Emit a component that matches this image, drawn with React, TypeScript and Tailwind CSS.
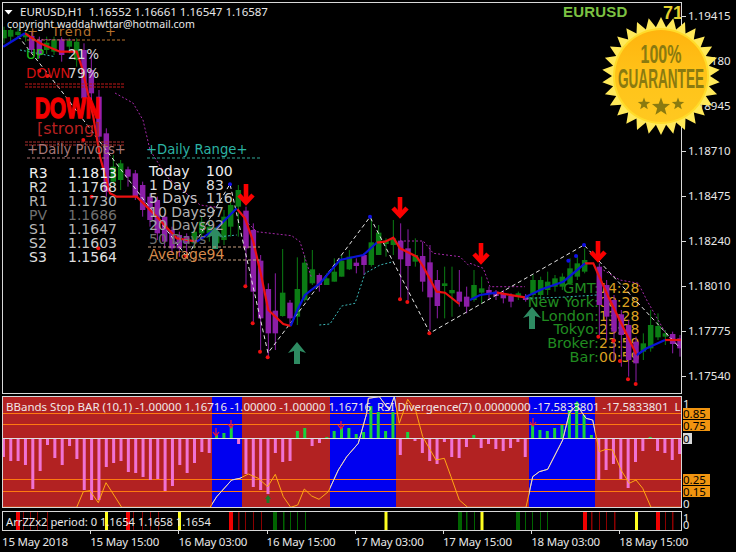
import React from "react";

type P = [number, number];
const z1 = (x: number, y: number): P => [x / 3, y / 3];
const z3 = (x: number, y: number): P => [x / 3, 390 + y / 3];
const z4 = (x: number, y: number): P => [366 + x / 3, 390 + y / 3];
const z5 = (x: number, y: number): P => [220 + x / 3, 170 + y / 3];
const z6 = (x: number, y: number): P => [470 + x / 3, 220 + y / 3];
const pts = (a: P[]) => a.map((p) => p[0].toFixed(1) + "," + p[1].toFixed(1)).join(" ");
const many = (f: (x: number, y: number) => P, a: number[][]) => a.map((q) => f(q[0], q[1]));

const G = "#0b7d14";
const V = "#8c1ea8";
// [x, bodyTop, bodyBottom, wickTop, wickBottom, colour]  in zoom coordinates
type C = [number, number, number, number, number, string];
const c1: C[] = [
  [12, 90, 115, 80, 130, G], [32, 90, 110, 80, 125, G], [54, 95, 105, 85, 115, G], [77, 100, 112, 92, 125, G],
  [95, 108, 150, 95, 160, V], [118, 120, 165, 110, 175, V], [140, 128, 150, 110, 162, G], [162, 118, 155, 110, 165, G],
  [185, 118, 165, 112, 185, V], [208, 122, 140, 115, 160, G], [230, 125, 180, 115, 200, G], [252, 150, 295, 130, 320, V],
  [274, 210, 280, 160, 300, V], [297, 290, 410, 270, 425, V], [319, 400, 575, 385, 590, V], [340, 500, 545, 465, 555, G],
  [362, 490, 540, 480, 570, G], [384, 508, 530, 500, 560, V], [406, 520, 590, 510, 600, V], [428, 555, 630, 545, 650, V],
  [450, 590, 660, 580, 680, V], [472, 600, 700, 590, 720, V], [494, 650, 725, 640, 745, V], [516, 690, 745, 680, 760, V],
  [538, 705, 745, 695, 770, V], [560, 708, 730, 700, 770, V], [583, 695, 730, 680, 745, G], [605, 665, 700, 650, 720, G],
  [628, 680, 700, 660, 725, G], [650, 695, 730, 680, 745, G], [672, 650, 720, 630, 735, G], [692, 615, 680, 590, 710, G],
  [715, 570, 620, 555, 710, G],
];
const c5: C[] = [
  [78, 122, 235, 110, 345, V], [100, 180, 365, 160, 455, V], [122, 272, 445, 255, 540, V], [145, 357, 490, 340, 560, V],
  [166, 422, 490, 310, 540, V], [188, 368, 438, 237, 440, G], [210, 398, 445, 390, 465, V], [232, 357, 440, 262, 465, G],
  [254, 278, 390, 255, 395, G], [277, 298, 340, 240, 345, G], [298, 315, 345, 310, 365, V], [320, 325, 345, 310, 345, G],
  [343, 305, 335, 265, 335, G], [365, 272, 320, 255, 320, G], [388, 260, 298, 240, 300, G], [409, 278, 288, 265, 310, V],
  [432, 255, 285, 250, 315, V], [454, 217, 285, 145, 290, G], [476, 188, 255, 165, 255, G], [498, 212, 222, 205, 260, G],
  [520, 205, 225, 150, 255, G], [542, 212, 268, 160, 385, V], [564, 235, 288, 178, 390, V], [586, 255, 275, 205, 290, G],
  [608, 258, 335, 215, 365, V], [630, 277, 382, 225, 480, V], [652, 330, 408, 300, 445, V], [674, 340, 348, 290, 445, G],
  [696, 360, 370, 290, 440, G], [718, 365, 395, 300, 410, V], [740, 380, 410, 350, 430, V],
];
const c6: C[] = [
  [12, 195, 240, 150, 245, G], [35, 205, 218, 170, 250, G], [57, 210, 220, 200, 240, V], [78, 215, 228, 210, 240, V],
  [100, 220, 235, 210, 250, V], [123, 228, 245, 220, 262, V], [145, 220, 230, 215, 240, G], [167, 228, 240, 222, 245, V],
  [189, 180, 225, 165, 240, G], [212, 180, 225, 170, 240, G], [233, 185, 210, 155, 225, G], [255, 175, 200, 165, 215, G],
  [277, 170, 200, 160, 210, G], [300, 145, 190, 115, 195, G], [322, 130, 170, 105, 180, G], [344, 120, 155, 85, 160, G],
  [388, 140, 255, 130, 345, V], [410, 195, 290, 180, 360, V], [432, 240, 335, 225, 420, V], [454, 283, 345, 270, 440, V],
  [476, 315, 420, 300, 470, V], [498, 365, 430, 350, 485, V], [520, 370, 395, 340, 420, G], [542, 315, 385, 270, 395, G],
  [564, 318, 352, 280, 360, G], [586, 340, 350, 330, 375, G], [608, 342, 372, 335, 400, V], [630, 355, 385, 345, 410, V],
];

const redDots: P[] = [
  z5(76, 349), z5(98, 460), z5(120, 545), z5(143, 562), z5(540, 388), z5(562, 396), z5(628, 490),
  z6(385, 350), z6(430, 362), z6(450, 423), z6(474, 478), z6(497, 492),
  z1(118, 212), z1(142, 228), z1(275, 590), z1(250, 420), z1(295, 745), z1(558, 768),
];
const blueDots: P[] = [z1(690, 553), z5(450, 140), z6(295, 122), z6(318, 108), z6(342, 75)];

const redPaths: P[][] = [
  many(z1, [[75, 100], [120, 130], [180, 155], [230, 155], [245, 200], [280, 350], [300, 470], [330, 580], [350, 590], [410, 590], [470, 650], [530, 715], [590, 725]]),
  many(z5, [[52, 118], [75, 145], [100, 215], [122, 310], [145, 420], [190, 462], [212, 468]]),
  many(z5, [[470, 218], [495, 215], [520, 203], [540, 235], [590, 260], [610, 290], [650, 365], [675, 368], [718, 402]]),
  many(z6, [[80, 218], [165, 232]]),
  many(z6, [[345, 130], [370, 130], [415, 230], [500, 405]]),
  many(z6, [[585, 360], [632, 360]]),
];
const bluePaths: P[][] = [
  many(z1, [[10, 140], [75, 100]]),
  many(z1, [[590, 725], [650, 685], [710, 625]]),
  many(z5, [[212, 468], [232, 420], [255, 375], [300, 340], [360, 270], [430, 255], [470, 218]]),
  many(z6, [[0, 240], [30, 225], [80, 218]]),
  many(z6, [[165, 232], [215, 208], [280, 185], [345, 130]]),
  many(z6, [[500, 405], [530, 385], [585, 360]]),
];
const zigzag: P[] = [[18, 36], [63, 93], [187, 257], [230, 184], [268, 353], [370, 217], [430, 333], [584, 245], [680, 348]];
const magenta: P[][] = [
  many(z1, [[100, 118], [225, 120]]),
  [[115, 93], [133, 103], [143, 120], [150, 150], [167, 177], [200, 205], [222, 208]],
  many(z5, [[85, 160], [110, 185], [215, 197], [240, 215], [260, 280], [275, 325]]),
  many(z5, [[540, 213], [610, 213], [640, 250], [720, 260], [750, 290]]),
  many(z6, [[0, 130], [40, 145], [60, 200], [165, 200]]),
  many(z6, [[400, 150], [450, 180], [505, 190], [530, 240], [590, 345], [632, 380]]),
];
const cyan: P[][] = [
  many(z5, [[298, 465], [330, 462], [365, 408], [405, 400], [435, 310], [480, 285], [520, 275]]),
  many(z6, [[170, 235], [270, 232], [380, 225]]),
  many(z5, [[0, 200], [50, 195]]),
  many(z1, [[60, 150], [165, 170]]),
];

const bars: number[] = [
  -18, -22, -22, -26, -50, -32, -6, -19, -26, -7, -20, -51, -61, -61, -28, -24, -22, -33, -34, -38, -41, -40, -52, -47, -26, -34, -24, -13, -14,
  3, 5, 11, -5, -35, -48, -51, -55, -14, -23, -22, 7, 10, -7, -4, 1, 7, 10, 10, 4, 6,
  32, 26, 7, 26, -16, 6, -2, -14, -22, -25, -3, -18, -19, -8, 3, -9, -5, -10, -12, -9, -3, -18,
  13, 8, 7, 10, 13, 28, 33, 23, 3, -41, -31, -25, -40, -49, -23, -12, 1, -12, -14, -21, -15,
];
const subLine: P[] = [
  ...many(z3, [[10, 352], [230, 352], [250, 305], [270, 302], [295, 338], [318, 278], [365, 352], [630, 352], [650, 320], [695, 270], [720, 265], [745, 252], [775, 265], [803, 290], [826, 253], [850, 320], [872, 352], [893, 345], [913, 297], [935, 318], [957, 328], [985, 305], [1015, 240], [1040, 200], [1075, 160], [1100, 70], [1105, 25]]),
  ...many(z4, [[40, 20], [70, 60], [85, 20], [100, 100], [125, 28], [150, 65], [170, 140], [210, 210], [235, 205], [255, 260], [280, 330], [305, 352], [480, 352], [500, 260], [520, 245], [545, 238], [590, 150], [610, 70], [632, 45], [660, 85], [680, 90], [700, 185], [720, 178], [740, 180], [765, 240], [790, 280], [810, 270], [830, 295], [855, 352], [945, 352]]),
];

const thirdBars: [number, number, string][] = [
  [16, 4, "#f00000"], [23, 1, "#8b0000"], [30, 1, "#8b0000"], [37, 1, "#8b0000"], [47, 1, "#8b0000"],
  [105, 3, "#ffff20"], [126, 4, "#f00000"], [133, 1, "#8b0000"], [142, 1, "#8b0000"], [150, 1, "#8b0000"], [158, 1, "#8b0000"],
  [178, 3, "#ffff20"], [229, 4, "#f00000"], [238, 1.5, "#8b0000"], [245, 1, "#8b0000"], [253, 1, "#8b0000"], [261, 1, "#8b0000"],
  [273, 4, "#006400"], [283, 1.5, "#006400"], [290, 1, "#006400"], [297, 1, "#006400"], [305, 1, "#006400"],
  [384.5, 3, "#ffff20"], [458, 4, "#006400"], [466, 1.5, "#006400"], [474, 1, "#006400"], [480.5, 3, "#ffff20"],
  [516, 4, "#006400"], [525, 1, "#006400"], [532, 1, "#006400"], [540, 1, "#006400"], [547, 1, "#006400"],
  [583, 4, "#f00000"], [591, 1.5, "#8b0000"], [599, 1, "#8b0000"], [606, 1, "#8b0000"], [614, 1.5, "#8b0000"],
  [635, 3, "#ffff20"], [656, 4, "#f00000"], [665, 1, "#8b0000"], [672, 1.5, "#8b0000"],
];

const Candle = ({ f, c }: { f: (x: number, y: number) => P; c: C }) => {
  const [x, a] = f(c[0], c[1]);
  const [, b] = f(c[0], c[2]);
  const [, t] = f(c[0], c[3]);
  const [, u] = f(c[0], c[4]);
  return (
    <g>
      <line x1={x} x2={x} y1={t} y2={u} stroke={c[5]} strokeWidth={1} />
      <rect x={x - 2.75} y={a} width={5.5} height={Math.max(b - a, 1)} fill={c[5]} />
    </g>
  );
};

const Down = ({ x, y }: { x: number; y: number }) => (
  <g transform={`translate(${x} ${y})`} fill="none" stroke="#fb0000" strokeWidth={4.6}>
    <path d="M0 -11 V8" />
    <path d="M-7 0 L0 7.5 L7 0" />
  </g>
);
const Up = ({ x, y }: { x: number; y: number }) => (
  <path transform={`translate(${x} ${y})`} fill="#2e8b62" d="M0 -11 L9 0 L3 -2 L3 11 L-3 11 L-3 -2 L-9 0 Z" />
);

const burst = (() => {
  const out: string[] = [];
  const n = 30;
  for (let i = 0; i < n * 2; i++) {
    const r = i % 2 === 0 ? 59 : 49;
    const a = (Math.PI * i) / n - Math.PI / 2;
    out.push((r * Math.cos(a)).toFixed(1) + "," + (r * Math.sin(a)).toFixed(1));
  }
  return out.join(" ");
})();
const star = (cx: number, cy: number, R: number) => {
  const out: string[] = [];
  for (let i = 0; i < 10; i++) {
    const r = i % 2 === 0 ? R : R * 0.42;
    const a = (Math.PI * i) / 5 - Math.PI / 2;
    out.push((cx + r * Math.cos(a)).toFixed(1) + "," + (cy + r * Math.sin(a)).toFixed(1));
  }
  return out.join(" ");
};

const dj = "[font-family:'DejaVu_Sans',sans-serif]";

export default function App() {
  return (
    <div className="relative w-[736px] h-[552px] overflow-hidden bg-black text-white [font-family:'Noto_Sans',sans-serif]">
      {/* price pane */}
      <div className="flex pl-[2px] pt-[2px]">
        <div className="relative w-[680px] h-[392px] border border-[#d8d8d8] overflow-hidden">
          {/* clock lies under the candles */}
          <div className={`absolute right-[82px] top-[278px] flex flex-col items-end text-[14.5px] leading-[14px] text-[#208c20] ${dj}`}>
            <span className="h-[13.8px]">GMT:</span>
            <span className="h-[13.8px]">New York:</span>
            <span className="h-[13.8px]">London:</span>
            <span className="h-[13.8px]">Tokyo:</span>
            <span className="h-[13.8px]">Broker:</span>
            <span className="h-[13.8px]">Bar:</span>
          </div>
          <div className={`absolute left-[596px] top-[278px] flex flex-col text-[14px] leading-[14px] text-[#dca020] ${dj}`}>
            <span className="h-[13.8px]">14:28</span>
            <span className="h-[13.8px]">08:28</span>
            <span className="h-[13.8px]">13:28</span>
            <span className="h-[13.8px]">23:28</span>
            <span className="h-[13.8px]">23:59</span>
            <span className="h-[13.8px]">00:59</span>
          </div>

          <svg className="absolute left-0 top-0" width={678} height={390} viewBox="3 3 678 390">
            {c1.map((c, i) => <Candle key={i} f={z1} c={c} />)}
            {c5.map((c, i) => <Candle key={i} f={z5} c={c} />)}
            {c6.map((c, i) => <Candle key={i} f={z6} c={c} />)}
            {magenta.map((p, i) => <polyline key={i} points={pts(p)} fill="none" stroke="#a428a8" strokeWidth={1} strokeDasharray="2 2" />)}
            {cyan.map((p, i) => <polyline key={i} points={pts(p)} fill="none" stroke="#3cb8b8" strokeWidth={1} strokeDasharray="2 2" />)}
            <polyline points={pts(zigzag)} fill="none" stroke="#e8e8e8" strokeWidth={1} strokeDasharray="4 3" />
            {redPaths.map((p, i) => <polyline key={i} points={pts(p)} fill="none" stroke="#ec1010" strokeWidth={2.2} />)}
            {bluePaths.map((p, i) => <polyline key={i} points={pts(p)} fill="none" stroke="#0a14d8" strokeWidth={2.2} />)}
            {redDots.map((p, i) => <circle key={i} cx={p[0]} cy={p[1]} r={2} fill="#f01010" />)}
            {blueDots.map((p, i) => <circle key={i} cx={p[0]} cy={p[1]} r={2} fill="#1010e8" />)}
            <Down x={246} y={195} />
            <Down x={400} y={208} />
            <Down x={481} y={254} />
            <Down x={598} y={252} />
            <Up x={297} y={353} />
            <Up x={532} y={318} />
            <Up x={215} y={238} />
            <g fill="none" strokeWidth={1}>
              <line x1={27} x2={125} y1={40} y2={40} stroke="#b8722c" strokeDasharray="3 2" />
              <line x1={25} x2={125} y1={84} y2={84} stroke="#c01818" strokeDasharray="3 1" />
              <line x1={25} x2={125} y1={87} y2={87} stroke="#c01818" strokeDasharray="3 1" />
              <line x1={25} x2={125} y1={142} y2={142} stroke="#b03030" strokeDasharray="3 1" />
              <line x1={25} x2={125} y1={145} y2={145} stroke="#b03030" strokeDasharray="3 1" />
              <line x1={27} x2={108} y1={158} y2={158} stroke="#a87070" strokeDasharray="3 2" />
              <line x1={147} x2={260} y1={158} y2={158} stroke="#30a898" strokeDasharray="3 2" />
              <line x1={148} x2={260} y1={247} y2={247} stroke="#c8a080" strokeDasharray="3 2" />
              <line x1={148} x2={260} y1={260} y2={260} stroke="#c8a080" strokeDasharray="3 2" />
            </g>
          </svg>

          {/* trend block */}
          <div className={`absolute left-[24px] top-[21px] flex w-[90px] justify-between text-[13px] leading-[16px] text-[#b8722c] tracking-[1px] ${dj}`}>
            <span>+</span><span>Trend</span><span>+</span>
          </div>
          <div className={`absolute left-[23px] top-[42px] flex flex-col text-[13.5px] leading-[18.5px] ${dj}`}>
            <div className="flex"><span className="w-[42px] text-[#1cc41c]">UP</span><span className="text-[#d8d8d8] tracking-[0.5px]">21%</span></div>
            <div className="flex"><span className="w-[42px] text-[#d01010]">DOWN</span><span className="text-[#d8d8d8] tracking-[0.5px]">79%</span></div>
          </div>
          <div className="absolute left-[32px] top-[92px] text-[21px] leading-[26px] font-bold text-[#f40000] tracking-[-0.3px] scale-y-[1.4] [-webkit-text-stroke:1px_#f40000] [font-family:'Liberation_Sans',sans-serif]">DOWN</div>
          <div className={`absolute left-[34px] top-[117px] text-[16px] leading-[18px] text-[#b82020] ${dj}`}>[strong]</div>

          {/* pivots */}
          <div className={`absolute left-[24px] top-[138px] text-[13.2px] leading-[18px] text-[#a87878] whitespace-pre ${dj}`}>+Daily Pivots+</div>
          <div className={`absolute left-[26px] top-[163px] flex flex-col text-[14px] leading-[14px] ${dj}`}>
            <div className="flex h-[14px] text-[#f0f0f0]"><span className="w-[39px]">R3</span><span>1.1813</span></div>
            <div className="flex h-[14px] text-[#dcdcdc]"><span className="w-[39px]">R2</span><span>1.1768</span></div>
            <div className="flex h-[14px] text-[#b4b4b4]"><span className="w-[39px]">R1</span><span>1.1730</span></div>
            <div className="flex h-[14px] text-[#707070]"><span className="w-[39px]">PV</span><span>1.1686</span></div>
            <div className="flex h-[14px] text-[#b8b8b8]"><span className="w-[39px]">S1</span><span>1.1647</span></div>
            <div className="flex h-[14px] text-[#c8c8c8]"><span className="w-[39px]">S2</span><span>1.1603</span></div>
            <div className="flex h-[14px] text-[#e0e0e0]"><span className="w-[39px]">S3</span><span>1.1564</span></div>
          </div>

          {/* daily range */}
          <div className={`absolute left-[143px] top-[138px] text-[13.2px] leading-[18px] text-[#2cb4a4] whitespace-pre ${dj}`}>+Daily Range+</div>
          <div className={`absolute left-[146px] top-[161px] flex flex-col text-[14px] leading-[14px] ${dj}`}>
            <div className="flex h-[13.5px] text-[#ececec]"><span className="w-[57px]">Today</span><span>100</span></div>
            <div className="flex h-[13.5px] text-[#dcdcdc]"><span className="w-[57px]">1 Day</span><span>83</span></div>
            <div className="flex h-[13.5px] text-[#c8c8c8]"><span className="w-[57px]">5 Days</span><span>116</span></div>
            <div className="flex h-[13.5px] text-[#b4b4b4]"><span>10 Days97</span></div>
            <div className="flex h-[13.5px] text-[#a4a4a4]"><span>20 Days92</span></div>
            <div className="flex h-[13.5px] text-[#707070]"><span>50 Days</span></div>
            <div className="flex h-[16px] items-end text-[#d88c4c]"><span>Average94</span></div>
          </div>

          {/* header */}
          <div className="absolute left-[1px] top-[2px] flex items-center h-[14px] text-[11.5px] leading-none text-[#e8e8e8] whitespace-pre">
            <span className="w-[9px] h-[5px] mr-[7px] bg-white [clip-path:polygon(0_0,100%_0,50%_100%)]" />
            <span>EURUSD,H1  1.16552 1.16661 1.16547 1.16587</span>
          </div>
          <div className="absolute left-[4px] top-[14px] text-[10.6px] leading-[14px] text-[#e8e8e8] whitespace-pre">copyright waddahwttar@hotmail.com</div>
          <div className="absolute left-[560px] top-[0px] text-[15px] leading-[18px] font-bold text-[#7cc142] tracking-[0.2px] [font-family:'Liberation_Sans',sans-serif]">EURUSD</div>
          <div className="absolute left-[660px] top-[0px] text-[18px] leading-[20px] font-bold text-[#e3d02e] [font-family:'Liberation_Sans',sans-serif]">71</div>
        </div>
        <div className="flex flex-col gap-[29px] pt-[6px] text-[11.5px] text-[#e8e8e8]">
          {["1.19415", "1.19180", "1.18945", "1.18710", "1.18475", "1.18240", "1.18010", "1.17775", "1.17540"].map((v) => (
            <div key={v} className="flex items-center h-[16px] leading-none">
              <span className="w-[4px] h-px bg-[#d8d8d8]" />
              <span className="ml-[2px]">{v}</span>
            </div>
          ))}
        </div>
      </div>

      {/* oscillator pane */}
      <div className="flex pl-[2px] mt-[2px]">
        <div className="relative w-[680px] h-[112px] border border-[#d8d8d8] overflow-hidden bg-[#b22222]">
          <svg className="absolute left-0 top-0" width={678} height={110} viewBox="3 397 678 110">
            <defs>
              <clipPath id="bands">
                <rect x={212} y={397} width={30} height={110} />
                <rect x={330} y={397} width={66} height={110} />
                <rect x={529} y={397} width={66} height={110} />
              </clipPath>
            </defs>
            <rect x={212} y={397} width={30} height={110} fill="#0000f0" />
            <rect x={330} y={397} width={66} height={110} fill="#0000f0" />
            <rect x={529} y={397} width={66} height={110} fill="#0000f0" />
            {[413, 424, 479, 491].map((y) => <line key={y} x1={3} x2={681} y1={y + 0.5} y2={y + 0.5} stroke="#ff7a10" strokeWidth={1} />)}
            <line x1={3} x2={681} y1={438.5} y2={438.5} stroke="#e0e0e0" strokeWidth={1} />
            {bars.map((v, i) => {
              const x = 3.4 + 7.35 * i;
              return v > 0
                ? <rect key={i} x={x - 1.5} y={438 - v} width={3} height={v} fill="#18d23c" />
                : <rect key={i} x={x - 1.5} y={439} width={3} height={-v} fill="#f072d4" />;
            })}
            <polyline points={pts(subLine)} fill="none" stroke="#ffa814" strokeWidth={1} />
            <polyline points={pts(subLine)} fill="none" stroke="#d8d8f0" strokeWidth={1} clipPath="url(#bands)" />
            <g fill="none" stroke="#f01838" strokeWidth={1.2}>
              <path d="M216 428 V436 M213 432 L216 436 L219 432" />
              <path d="M231 420 V428 M228 424 L231 428 L234 424" />
              <path d="M341 421 V429 M338 425 L341 429 L344 425" />
              <path d="M533 418 V426 M530 422 L533 426 L536 422" />
            </g>
            <path d="M268 495 L271 499 L269.5 499 V503 H266.5 V499 H265 Z" fill="#1c7a28" />
            <path d="M577 401 L580 405 L578.5 405 V408 H575.5 V405 H574 Z" fill="#18d23c" />
          </svg>
          <div className="absolute left-[3px] top-[2px] text-[11.5px] leading-[15px] text-[#f0e8e8] whitespace-pre">BBands Stop BAR (10,1) -1.00000 1.16716 -1.00000 -1.00000 1.16716  RSI Divergence(7) 0.0000000 -17.5833801 -17.5833801  L</div>
        </div>
        <div className="flex flex-col w-[27px] ml-px text-[11.5px] text-black">
          <span className="mt-[3px] h-[9px] leading-[9px] text-[#e8e8e8]">1</span>
          <span className="h-[11px] leading-[11px] bg-[#f09410]">0.85</span>
          <span className="mt-px h-[11px] leading-[11px] bg-[#f09410]">0.75</span>
          <span className="mt-[2px] w-[9px] h-[11px] leading-[11px] bg-[#d8d8d8]">0</span>
          <span className="mt-[30px] h-[11px] leading-[11px] bg-[#f09410]">0.25</span>
          <span className="mt-px h-[11px] leading-[11px] bg-[#f09410]">0.15</span>
          <span className="mt-[1px] h-[11px] leading-[11px] text-[#e8e8e8]">0</span>
        </div>
      </div>

      {/* zigzag pane */}
      <div className="flex pl-[2px] mt-[2px]">
        <div className="relative w-[680px] h-[20px] border border-[#d8d8d8] overflow-hidden">
          <svg className="absolute left-0 top-0" width={678} height={18} viewBox="3 511 678 18">
            {thirdBars.map((b, i) => <rect key={i} x={b[0]} y={511} width={b[1]} height={18} fill={b[2]} />)}
          </svg>
          <div className="absolute left-[3px] top-[2px] text-[11.2px] leading-[15px] text-[#e8e8e8] whitespace-pre">ArrZZx2 period: 0 1.1654 1.1658 1.1654</div>
        </div>
        <div className="flex flex-col ml-px text-[11px] text-[#e8e8e8] leading-[7px] pt-[3px]">
          <span>1</span>
          <span>0</span>
        </div>
      </div>

      {/* time axis */}
      <div className="flex pl-[2px] text-[11.5px] tracking-[-0.2px] leading-[16px] text-[#e8e8e8]">
        {["15 May 2018", "15 May 15:00", "16 May 03:00", "16 May 15:00", "17 May 03:00", "17 May 15:00", "18 May 03:00", "18 May 15:00"].map((t, i) => (
          <div key={t} className="flex flex-col w-[88.2px] shrink-0">
            <span className={i === 0 ? "w-px h-[3px]" : "w-px h-[3px] bg-[#d8d8d8]"} />
            <span className="whitespace-nowrap">{t}</span>
          </div>
        ))}
      </div>

      {/* guarantee badge */}
      <svg className="absolute left-[601px] top-[16px]" width={120} height={120} viewBox="-60 -60 120 120">
        <defs>
          <linearGradient id="gold" x1="0" x2="0" y1="0" y2="1">
            <stop offset="0" stopColor="#ffb40e" />
            <stop offset="0.55" stopColor="#ffc41a" />
            <stop offset="1" stopColor="#ffc820" />
          </linearGradient>
        </defs>
        <polygon points={burst} fill="#ffe95a" />
        <circle r={48} fill="#ffdc2a" />
        <circle r={46} fill="url(#gold)" />
        <text x={0} y={-13} textAnchor="middle" fill="#8a7a10" fontSize={25} fontWeight={700} textLength={41} lengthAdjust="spacingAndGlyphs" fontFamily="'Liberation Sans',sans-serif">100%</text>
        <text x={0} y={12} textAnchor="middle" fill="#8a7a10" fontSize={27} fontWeight={700} textLength={86} lengthAdjust="spacingAndGlyphs" fontFamily="'Liberation Sans',sans-serif">GUARANTEE</text>
        <polygon points={star(-17, 28, 6.5)} fill="#8a7a10" />
        <polygon points={star(0, 31, 9.5)} fill="#8a7a10" />
        <polygon points={star(17, 28, 6.5)} fill="#8a7a10" />
      </svg>
    </div>
  );
}
